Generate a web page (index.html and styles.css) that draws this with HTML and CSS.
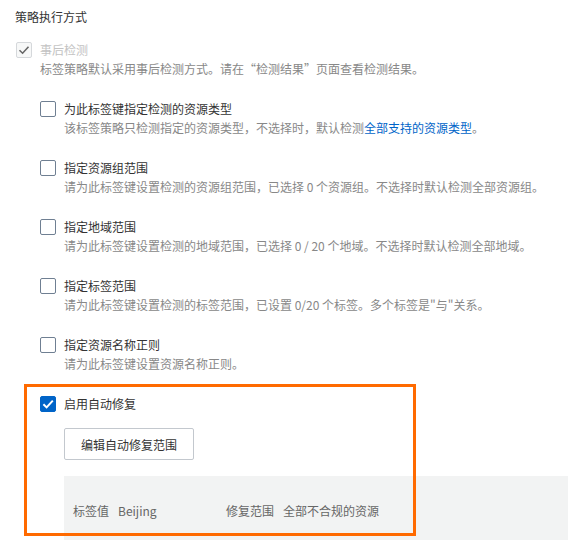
FILE: index.html
```html
<!DOCTYPE html>
<html lang="zh">
<head>
<meta charset="utf-8">
<link rel="stylesheet" href="styles.css">
</head>
<body>
<div class="page">
  <div class="title">策略执行方式</div>

  <div class="item">
    <div class="opt">
      <span class="cb cb-disabled"><svg viewBox="0 0 16 16" width="16" height="16"><polyline points="3.5,8.2 6.6,11.2 12.5,4.8" fill="none" stroke="#666" stroke-width="1.6"/></svg></span>
      <span class="label label-disabled">事后检测</span>
    </div>
    <div class="desc">标签策略默认采用事后检测方式。请在“检测结果”页面查看检测结果。</div>
  </div>

  <div class="item sub">
    <div class="opt"><span class="cb"></span><span class="label">为此标签键指定检测的资源类型</span></div>
    <div class="desc">该标签策略只检测指定的资源类型，不选择时，默认检测<span class="link">全部支持的资源类型</span>。</div>
  </div>

  <div class="item sub">
    <div class="opt"><span class="cb"></span><span class="label">指定资源组范围</span></div>
    <div class="desc">请为此标签键设置检测的资源组范围，已选择 0 个资源组。不选择时默认检测全部资源组。</div>
  </div>

  <div class="item sub">
    <div class="opt"><span class="cb"></span><span class="label">指定地域范围</span></div>
    <div class="desc">请为此标签键设置检测的地域范围，已选择 0 / 20 个地域。不选择时默认检测全部地域。</div>
  </div>

  <div class="item sub">
    <div class="opt"><span class="cb"></span><span class="label">指定标签范围</span></div>
    <div class="desc">请为此标签键设置检测的标签范围，已设置 0/20 个标签。多个标签是"与"关系。</div>
  </div>

  <div class="item sub">
    <div class="opt"><span class="cb"></span><span class="label">指定资源名称正则</span></div>
    <div class="desc">请为此标签键设置资源名称正则。</div>
  </div>

  <div class="item sub last">
    <div class="opt">
      <span class="cb cb-checked"><svg viewBox="0 0 16 16" width="16" height="16"><polyline points="3.4,8.2 6.6,11.4 12.8,4.6" fill="none" stroke="#fff" stroke-width="2"/></svg></span>
      <span class="label">启用自动修复</span>
    </div>
    <button class="btn">编辑自动修复范围</button>
    <div class="panel">
      <div class="field"><span>标签值</span><span>Beijing</span></div>
      <div class="field"><span>修复范围</span><span>全部不合规的资源</span></div>
    </div>
  </div>
</div>
<div class="highlight"></div>
</body>
</html>
```
FILE: styles.css
```css
html, body {
  margin: 0;
  padding: 0;
  overflow: hidden;
  background: #fff;
}
body {
  font-family: "Noto Sans CJK SC", "Noto Sans", sans-serif;
  font-size: 12px;
  color: #333;
  position: relative;
  width: 568px;
  height: 540px;
}
.page {
  padding: 8px 0 0 16px;
}
.title {
  line-height: 18px;
  margin-left: -1px;
  margin-bottom: 16px;
  color: #333;
}
.item {
  margin-bottom: 21px;
}
.item.sub {
  margin-left: 24px;
}
.opt {
  display: flex;
  align-items: center;
  height: 16px;
  gap: 8px;
}
.cb {
  width: 16px;
  height: 16px;
  box-sizing: border-box;
  border: 1px solid #6f7f92;
  border-radius: 2px;
  background: #fff;
  flex: none;
  position: relative;
}
.cb svg {
  position: absolute;
  left: -1px;
  top: -1px;
}
.cb-disabled {
  border-color: #d5d8db;
  background: #f7f8f8;
}
.cb-checked {
  border-color: #0064c8;
  background: #0064c8;
}
.label {
  line-height: 16px;
  color: #333;
}
.label-disabled {
  color: #c3c3c3;
}
.desc {
  padding-left: 24px;
  line-height: 22px;
  color: #888;
  white-space: nowrap;
}
.link {
  color: #0064c8;
}
.btn {
  display: block;
  margin: 16px 0 0 24px;
  height: 32px;
  padding: 0 16px;
  border: 1px solid #c3c8ce;
  border-radius: 2px;
  background: #fff;
  font-family: inherit;
  font-size: 12px;
  color: #333;
}
.panel {
  margin: 16px 0 0 24px;
  background: #f2f3f3;
  padding: 24px 0 24px 9px;
  display: grid;
  grid-template-columns: 153px auto;
  line-height: 22px;
  color: #666;
}
.field {
  display: flex;
  gap: 9px;
}
.highlight {
  position: absolute;
  left: 24px;
  top: 384px;
  width: 392px;
  height: 152px;
  box-sizing: border-box;
  border: 3px solid #ff6a00;
  pointer-events: none;
}
```
